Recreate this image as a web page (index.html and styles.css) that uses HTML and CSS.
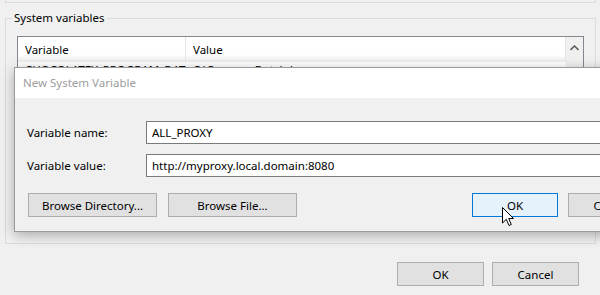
FILE: index.html
```html
<!DOCTYPE html>
<html lang="en">
<head>
    <meta charset="UTF-8">
    <title>Environment Variables</title>
    <link rel="stylesheet" href="styles.css">
</head>
<body>
    <div class="window">
        <div class="top-group"></div>
        <div class="group">
            <div class="group-title">System variables</div>
            <div class="listbox">
                <div class="list-main">
                    <div class="list-header">
                        <div class="col col-name">Variable</div>
                        <div class="col col-value">Value</div>
                    </div>
                    <div class="list-row">
                        <div class="col col-name">CHOCOLATEY_PROGRAM_DATA</div>
                        <div class="col col-value">C:\ProgramData\choco</div>
                    </div>
                </div>
                <div class="scrollbar">
                    <div class="scroll-up">
                        <svg width="9" height="6" viewBox="0 0 9 6"><path d="M0.5 5 L4.5 1 L8.5 5" fill="none" stroke="#606060" stroke-width="1.6"/></svg>
                    </div>
                </div>
            </div>
        </div>
        <div class="footer">
            <button class="btn">OK</button>
            <button class="btn">Cancel</button>
        </div>
    </div>

    <!-- modal dialog sits over the list -->
    <div class="dialog">
        <div class="dialog-title">New System Variable</div>
        <div class="dialog-body">
            <div class="field">
                <label for="var-name">Variable name:</label>
                <input type="text" id="var-name" value="ALL_PROXY">
            </div>
            <div class="field">
                <label for="var-value">Variable value:</label>
                <input type="text" id="var-value" value="http://myproxy.local.domain:8080">
            </div>
            <div class="dialog-buttons">
                <button class="btn btn-wide">Browse Directory...</button>
                <button class="btn btn-wide">Browse File...</button>
                <button class="btn btn-default">OK</button>
                <button class="btn">Cancel</button>
            </div>
        </div>
        <svg class="cursor" width="13" height="20" viewBox="0 0 13 20">
            <path d="M0.5 0.5 L0.5 16 L4.3 12.3 L7 18.5 L9.3 17.5 L6.7 11.5 L11.5 11.5 Z" fill="#fff" stroke="#000" stroke-width="1" stroke-linejoin="miter"/>
        </svg>
    </div>
</body>
</html>
```

FILE: styles.css
```css
:root {
    --face: #f0f0f0;
    --frame: #dcdcdc;
    --btn-face: #e1e1e1;
    --btn-border: #adadad;
    --accent: #0078d7;
}

* {
    margin: 0;
    padding: 0;
    box-sizing: border-box;
}

body {
    background-color: var(--face);
    font-family: 'Noto Sans', 'Open Sans', sans-serif;
    font-size: 11.5px;
    color: #000;
    overflow: hidden;
}

.window {
    width: 600px;
    height: 295px;
}

.top-group {
    height: 3px;
    margin: 0 4px 0 5px;
    border: 1px solid var(--frame);
    border-top: none;
}

/* System variables group box */
.group {
    height: 226px;
    margin: 15px 4px 0 5px;
    border: 1px solid var(--frame);
}

.group-title {
    width: fit-content;
    margin: -9px 0 0 6px;
    padding: 0 2px;
    line-height: 16px;
    background-color: var(--face);
}

.listbox {
    display: flex;
    height: 186px;
    margin: 10px 11px 0 11px;
    border: 1px solid #828790;
    background-color: #fff;
}

.list-main {
    flex: 1;
}

.list-header {
    display: flex;
    height: 25px;
    background: linear-gradient(#fff 0%, #fff 70%, #ececec 100%);
}

.list-header .col {
    line-height: 25px;
}

.col {
    padding-left: 7px;
    white-space: nowrap;
    overflow: hidden;
}

.col-name {
    width: 168px;
}

.list-header .col-name {
    border-right: 1px solid #e5e5e5;
}

.col-value {
    flex: 1;
    padding-left: 7px;
}

.list-header .col-value {
    border-right: 1px solid #e5e5e5;
}

.list-row {
    display: flex;
    line-height: 16px;
}

.scrollbar {
    width: 17px;
    background-color: var(--face);
}

.scroll-up {
    display: flex;
    justify-content: center;
    padding-top: 8px;
    height: 17px;
}

.footer {
    display: flex;
    justify-content: flex-end;
    gap: 8px;
    margin: 18px 21px 0 0;
}

.btn {
    flex-shrink: 0;
    width: 87px;
    height: 24px;
    font-family: inherit;
    font-size: 11.5px;
    color: #000;
    background-color: var(--btn-face);
    border: 1px solid var(--btn-border);
}

/* dialog */
.dialog {
    position: absolute;
    left: 14px;
    top: 67px;
    width: 620px;
    height: 165px;
    background-color: var(--face);
    border: 1px solid #9a9a9a;
    box-shadow: 0 3px 12px rgba(0, 0, 0, 0.3);
}

.dialog-title {
    height: 30px;
    line-height: 30px;
    padding-left: 8px;
    background-color: #fff;
    color: #9d9d9d;
}

.dialog-body {
    padding: 23px 0 0 12px;
}

.field {
    display: flex;
    align-items: center;
    height: 23px;
    margin-bottom: 10px;
}

.field label {
    width: 119px;
}

.field input {
    flex: 1;
    height: 23px;
    padding-left: 5px;
    font-family: inherit;
    font-size: 11.5px;
    border: 1px solid #7a7a7a;
    background-color: #fff;
    outline: none;
}

.dialog-buttons {
    display: flex;
    gap: 10px;
    margin: 16px 0 0 1px;
}

.btn-wide {
    width: 129px;
}

.dialog-buttons .btn-wide + .btn-wide {
    margin-left: 1px;
}

.btn-default {
    margin-left: 165px;
    width: 86px;
    background-color: #e5f1fb;
    border-color: var(--accent);
}

.cursor {
    position: absolute;
    left: 487px;
    top: 139px;
}
```
